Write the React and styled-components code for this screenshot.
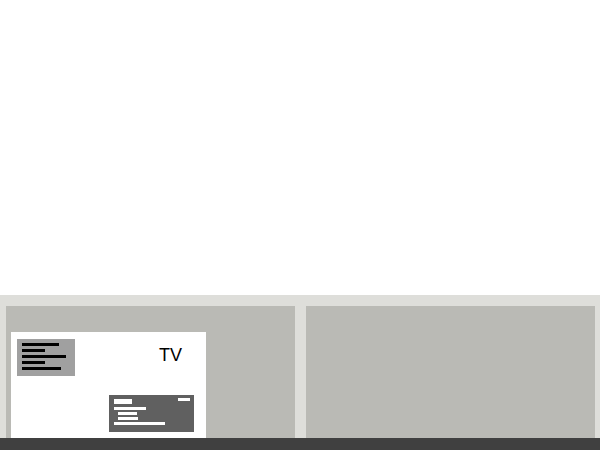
import React from "react";
import styled, { createGlobalStyle } from "styled-components";

const Global = createGlobalStyle`
  html, body { margin: 0; padding: 0; background: #ffffff; }
  body { font-family: "Liberation Sans", Arial, sans-serif; }
`;

const Page = styled.div`
  width: 600px;
  height: 450px;
  display: flex;
  flex-direction: column;
  overflow: hidden;
`;

const Stage = styled.div`
  flex: 1;
  background: #ffffff;
`;

const Shelf = styled.div`
  height: 143px;
  box-sizing: border-box;
  background: #dededa;
  padding: 11px 0 0 6px;
  display: grid;
  grid-template-columns: 289px 289px;
  column-gap: 11px;
`;

const Slot = styled.div`
  background: #babab5;
  overflow: hidden;
  padding: 26px 0 0 5px;
  box-sizing: border-box;
`;

const Tile = styled.div`
  width: 195px;
  height: 130px;
  background: #ffffff;
  box-sizing: border-box;
  padding: 7px 0 0 6px;
  display: flex;
  flex-direction: column;
`;

const TopRow = styled.div`
  display: flex;
  align-items: flex-start;
`;

const ListBadge = styled.div`
  width: 58px;
  height: 37px;
  background: #a0a0a0;
  box-sizing: border-box;
  padding: 4px 0 0 5px;
  display: flex;
  flex-direction: column;
  gap: 3px;
`;

const Bar = styled.div`
  height: 3px;
  width: ${(p) => p.$w}px;
  margin-left: ${(p) => p.$indent || 0}px;
  background: ${(p) => p.$color};
`;

const Label = styled.span`
  margin: 6.5px 0 0 84px;
  font-size: 18px;
  line-height: 18px;
  color: #000000;
`;

const Guide = styled.div`
  margin: 19px 0 0 92px;
  width: 85px;
  height: 37px;
  background: #606060;
  box-sizing: border-box;
  padding: 4px 4px 0 5px;
  display: flex;
  flex-direction: column;
`;

const GuideHead = styled.div`
  display: flex;
  justify-content: space-between;
  align-items: flex-start;
  height: 5px;
  margin-bottom: 3px;
`;

const Block = styled.div`
  width: ${(p) => p.$w}px;
  height: ${(p) => p.$h}px;
  background: #ffffff;
`;

const GuideLines = styled.div`
  display: flex;
  flex-direction: column;
  gap: 2px;
`;

const Footer = styled.div`
  height: 12px;
  background: #404040;
`;

export default function App() {
  return (
    <>
      <Global />
      <Page>
        <Stage />
        <Shelf>
          <Slot>
            <Tile>
              <TopRow>
                <ListBadge>
                  <Bar $w={37} $color="#000" />
                  <Bar $w={23} $color="#000" />
                  <Bar $w={44} $color="#000" />
                  <Bar $w={23} $color="#000" />
                  <Bar $w={39} $color="#000" />
                </ListBadge>
                <Label>TV</Label>
              </TopRow>
              <Guide>
                <GuideHead>
                  <Block $w={18} $h={5} />
                  <Block $w={12} $h={3} style={{ marginTop: -1 }} />
                </GuideHead>
                <GuideLines>
                  <Bar $w={32} $color="#fff" />
                  <Bar $w={19} $indent={4} $color="#fff" />
                  <Bar $w={20} $indent={4} $color="#fff" />
                  <Bar $w={51} $color="#fff" />
                </GuideLines>
              </Guide>
            </Tile>
          </Slot>
          <Slot />
        </Shelf>
        <Footer />
      </Page>
    </>
  );
}
